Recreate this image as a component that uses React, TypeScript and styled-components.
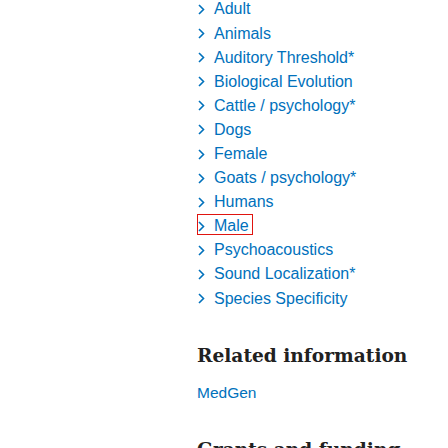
import React from "react";
import styled, { createGlobalStyle } from "styled-components";

const Global = createGlobalStyle`
  html, body { margin: 0; padding: 0; background: #fff; }
  body { font-family: "Liberation Sans", Arial, sans-serif; }
`;

const Page = styled.div`
  display: grid;
  grid-template-columns: 197px 1fr;
  width: 448px;
  height: 448px;
  overflow: hidden;
`;

const Column = styled.div`
  display: flex;
  flex-direction: column;
  & > * { flex-shrink: 0; }
`;

const List = styled.ul`
  list-style: none;
  margin: -4.1px 0 0;
  padding: 0;
  display: flex;
  flex-direction: column;
`;

const Item = styled.li`
  height: 24.1px;
  display: flex;
  align-items: center;
  flex-shrink: 0;
`;

const Link = styled.a<{ $focused?: boolean }>`
  display: inline-flex;
  align-items: center;
  gap: 9px;
  color: #0071bc;
  font-size: 16px;
  line-height: 18px;
  height: 21px;
  padding: 3px 4px 0 0;
  text-decoration: none;
  outline: ${(p) => (p.$focused ? "1px solid #e0140f" : "none")};
  outline-offset: -1px;
  box-sizing: border-box;
`;

const Chevron = styled.svg`
  width: 7px;
  height: 11px;
  flex: none;
  margin-left: 1px;
`;

const Heading = styled.h2`
  margin: 35.3px 0 0;
  font-family: "DejaVu Serif", serif;
  font-weight: bold;
  font-size: 18.6px;
  line-height: 24px;
  color: #212121;
`;

const Related = styled.a`
  margin-top: 15px;
  color: #0071bc;
  font-size: 15.5px;
  line-height: 20px;
  text-decoration: none;
`;

const NextHeading = styled(Heading)`
  margin-top: 34.5px;
`;

const terms = [
  "Adult",
  "Animals",
  "Auditory Threshold*",
  "Biological Evolution",
  "Cattle / psychology*",
  "Dogs",
  "Female",
  "Goats / psychology*",
  "Humans",
  "Male",
  "Psychoacoustics",
  "Sound Localization*",
  "Species Specificity",
];

export default function App() {
  return (
    <>
      <Global />
      <Page>
        <div />
        <Column>
          <List>
            {terms.map((t) => (
              <Item key={t}>
                <Link href="#" $focused={t === "Male"}>
                  <Chevron viewBox="0 0 7 11">
                    <path d="M1 1 L5.5 5.5 L1 10" fill="none" stroke="#0071bc" strokeWidth="1.6" />
                  </Chevron>
                  <span>{t}</span>
                </Link>
              </Item>
            ))}
          </List>
          <Heading>Related information</Heading>
          <Related href="#">MedGen</Related>
          <NextHeading>Grants and funding</NextHeading>
        </Column>
      </Page>
    </>
  );
}
